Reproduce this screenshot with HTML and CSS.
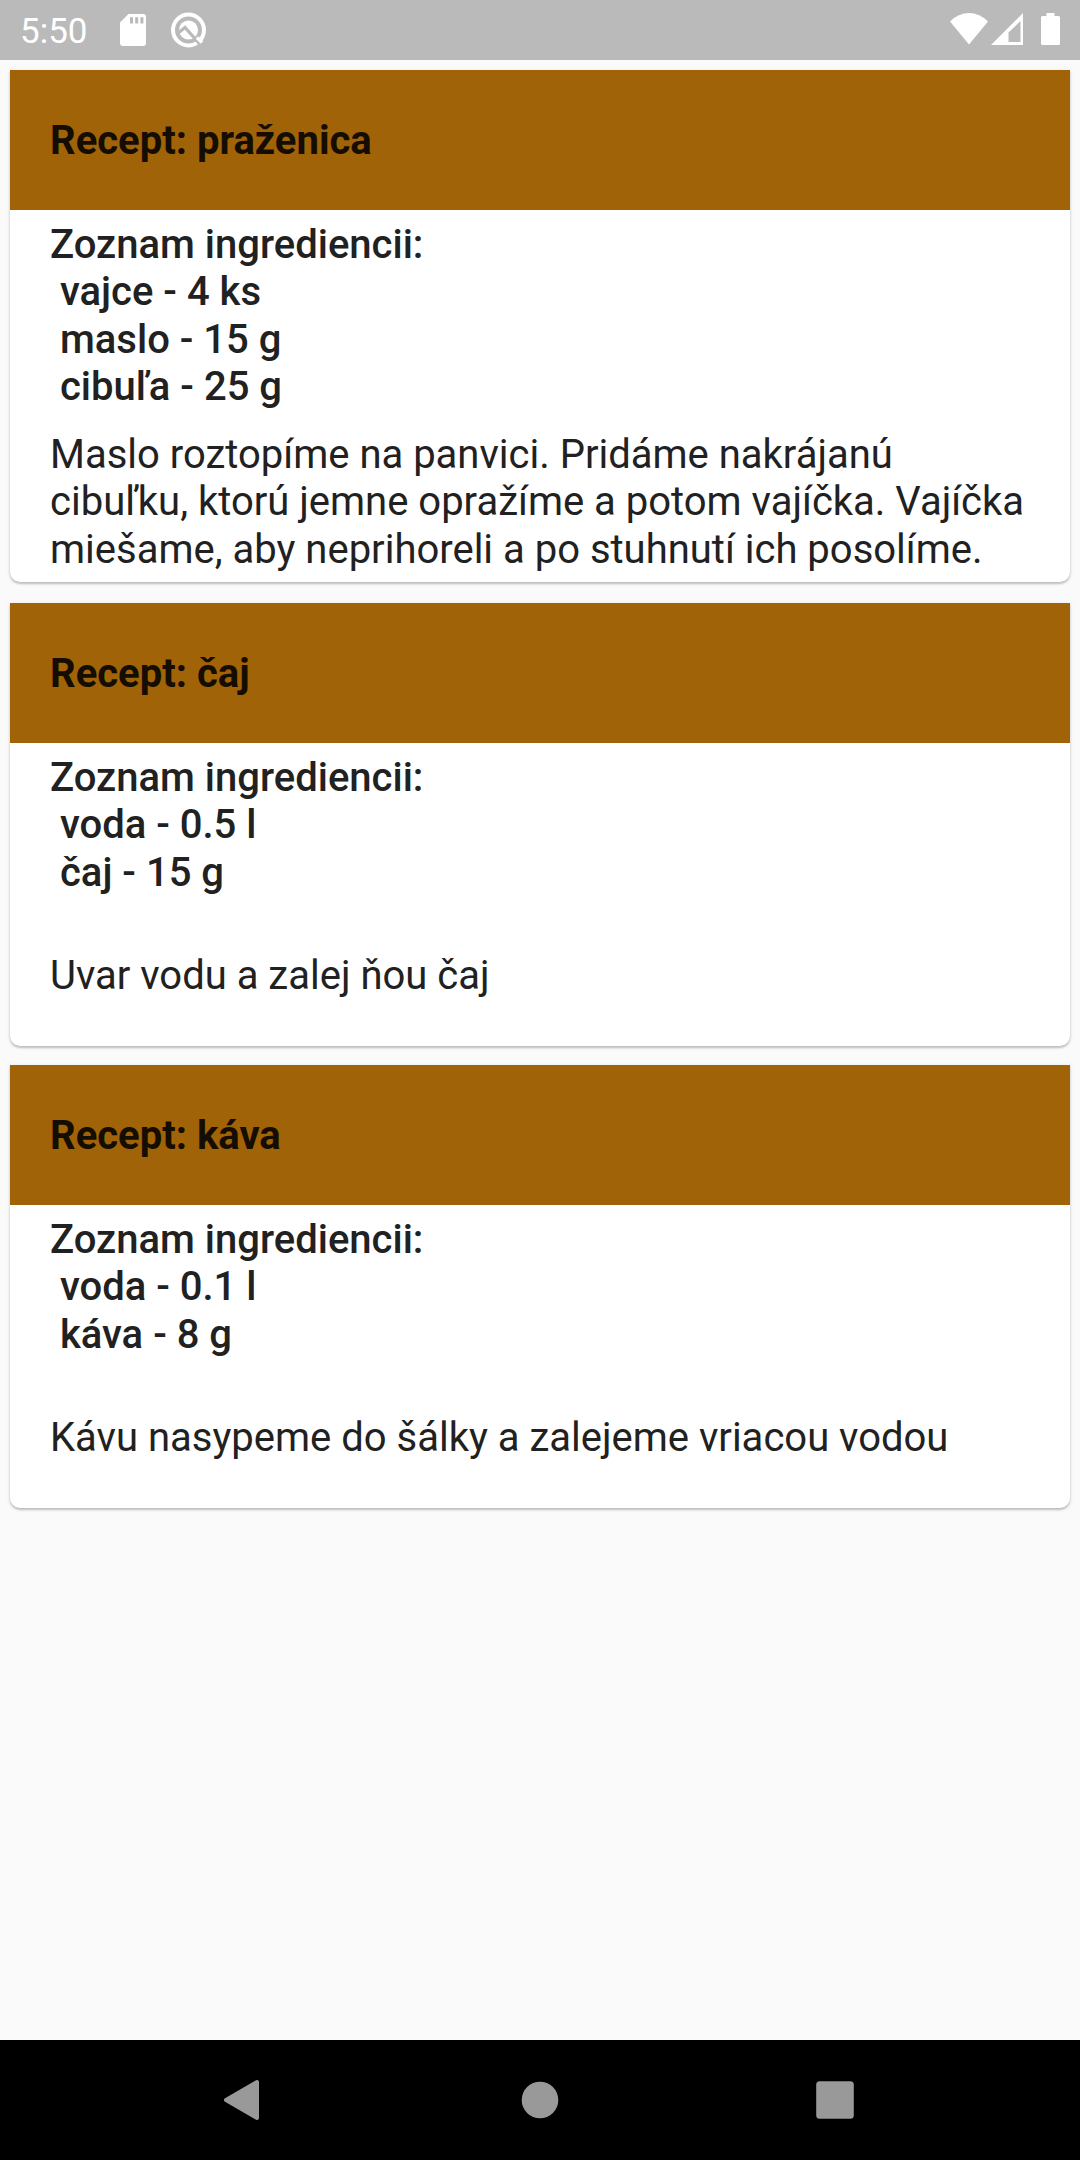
FILE: index.html
```html
<!DOCTYPE html>
<html lang="sk">
<head>
<meta charset="utf-8">
<title>Recepty</title>
<link rel="stylesheet" href="styles.css">
</head>
<body>
<div class="screen">
  <header class="status-bar">
    <span class="clock">5:50</span>
    <svg class="sd" width="28" height="34" viewBox="0 0 28 34"><path fill="#fff" fill-rule="evenodd" d="M9.500 1H24a3 3 0 0 1 3 3v26a3 3 0 0 1-3 3H4a3 3 0 0 1-3-3V9.500zM11 4.200v6.300h3V4.200zM16.200 4.200v6.300h3V4.200zM21.400 4.200v6.300h3V4.200z"/></svg>
    <svg class="quick" width="38" height="38" viewBox="0 0 38 38"><circle cx="18.500" cy="19" r="15.500" fill="none" stroke="#fff" stroke-width="4"/><circle cx="18.500" cy="19" r="9.500" fill="#fff"/><path d="M7.500 22.500l7.500-6L31 34.500" fill="none" stroke="#bababa" stroke-width="3.200"/><path d="M27 26.500l5 5" fill="none" stroke="#fff" stroke-width="3.600"/></svg>
    <span class="spacer"></span>
    <svg class="status-icon" width="38" height="34" viewBox="0 0 38 34"><path fill="#fff" d="M0 9.500Q8.500 1 19 1t19 8.500L19 32.500z"/></svg>
    <svg class="status-icon signal" width="33" height="34" viewBox="0 0 33 34"><path fill="#fff" fill-rule="evenodd" d="M32 1v32H0zM29.500 9L17.500 20.500V30h12z"/></svg>
    <svg class="status-icon battery" width="19" height="34" viewBox="0 0 19 34"><path fill="#fff" d="M5.500 1h8v3H17.500A1.500 1.500 0 0 1 19 5.500v26a1.500 1.500 0 0 1-1.500 1.500h-16A1.500 1.500 0 0 1 0 31.500v-26A1.500 1.500 0 0 1 1.500 4h4z"/></svg>
  </header>
  <main class="recipes">
    <article class="card">
      <h2 class="card-title">Recept: praženica</h2>
      <div class="ingredients">
        <div>Zoznam ingrediencii:</div>
        <div class="item"> vajce - 4 ks</div>
        <div class="item"> maslo - 15 g</div>
        <div class="item"> cibuľa - 25 g</div>
      </div>
      <p class="steps steps-long">Maslo roztopíme na panvici. Pridáme nakrájanú<br>cibuľku, ktorú jemne opražíme a potom vajíčka. Vajíčka<br>miešame, aby neprihoreli a po stuhnutí ich posolíme.</p>
    </article>
    <article class="card">
      <h2 class="card-title">Recept: čaj</h2>
      <div class="ingredients">
        <div>Zoznam ingrediencii:</div>
        <div class="item"> voda - 0.5 l</div>
        <div class="item"> čaj - 15 g</div>
      </div>
      <p class="steps steps-short">Uvar vodu a zalej ňou čaj</p>
    </article>
    <article class="card">
      <h2 class="card-title">Recept: káva</h2>
      <div class="ingredients">
        <div>Zoznam ingrediencii:</div>
        <div class="item"> voda - 0.1 l</div>
        <div class="item"> káva - 8 g</div>
      </div>
      <p class="steps steps-short">Kávu nasypeme do šálky a zalejeme vriacou vodou</p>
    </article>
  </main>
  <nav class="nav-bar">
    <svg class="back" width="40" height="44" viewBox="0 0 40 44"><path fill="#999" stroke="#999" stroke-width="4" stroke-linejoin="round" d="M1 22L32 4v36z"/></svg>
    <svg width="40" height="44" viewBox="0 0 40 44"><circle cx="20" cy="22" r="18.300" fill="#999"/></svg>
    <svg width="40" height="44" viewBox="0 0 40 44"><rect x="1.200" y="3.200" width="37.600" height="37.600" rx="3.500" fill="#999"/></svg>
  </nav>
</div>
</body>
</html>
```
FILE: styles.css
```css
* { box-sizing: border-box; }

body {
  margin: 0;
  background: #fafafa;
  font-family: Roboto, sans-serif;
  color: #212121;
}

.screen {
  width: 1080px;
  height: 2160px;
  display: flex;
  flex-direction: column;
}

.status-bar {
  flex: none;
  height: 60px;
  display: flex;
  align-items: center;
  padding: 0 20px;
  background: #bababa;
  color: #fff;
}

.clock {
  width: 99px;
  font-size: 35px;
  line-height: 60px;
  padding-top: 3px;
}

.status-icon {
  flex: none;
  display: block;
  margin-bottom: 2px;
}

.sd { margin: 0 22.5px 0 0; }
.signal { margin-left: 3px; }
.battery { margin-left: 17px; }
.spacer { flex: 1; }

.recipes {
  flex: 1;
  display: flex;
  flex-direction: column;
  gap: 20px;
  padding: 10px;
}

.card {
  flex: none;
  background: #fff;
  border-radius: 0 0 10px 10px;
  box-shadow: 0 2px 2px rgba(0, 0, 0, 0.18), 0 1px 4px rgba(0, 0, 0, 0.12);
  font-size: 40px;
  line-height: 47.5px;
}

.card:nth-child(2) {
  margin-top: 1px;
  margin-bottom: -0.5px;
}

.card-title {
  display: flex;
  align-items: center;
  height: 140px;
  margin: 0;
  padding: 1px 40px 0;
  background: #a16307;
  color: #150d01;
  font-size: 40px;
  font-weight: 700;
}

.ingredients {
  padding: 10.5px 40px 9.5px;
  font-weight: 500;
}

.item { white-space: pre; }

.steps {
  margin: 0;
  padding: 10.5px 40px 9.5px;
}

.steps-long { padding-bottom: 9px; }

.steps-short {
  height: 140px;
  display: flex;
  align-items: center;
}

.nav-bar {
  flex: none;
  height: 120px;
  display: flex;
  align-items: center;
  justify-content: center;
  gap: 255px;
  background: #000;
}

.back { overflow: visible; }
```
